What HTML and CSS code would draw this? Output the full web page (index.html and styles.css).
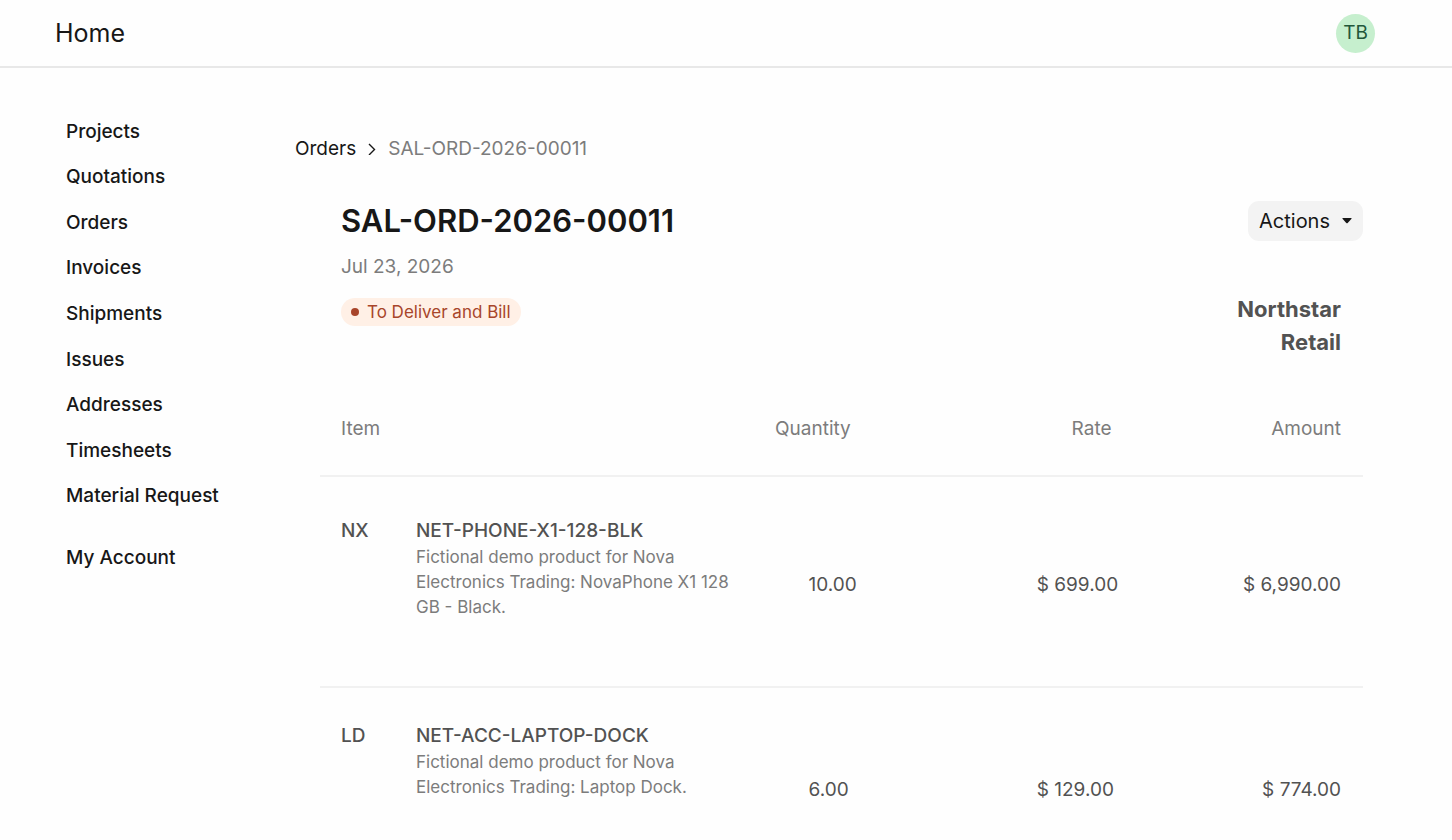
FILE: index.html
```html
<!DOCTYPE html>
<html lang="en">
<head>
    <meta charset="UTF-8" />
    <meta name="viewport" content="width=device-width, initial-scale=1.0" />
    <title>SAL-ORD-2026-00011</title>
    <link rel="stylesheet" href="styles.css">
</head>
<body>
    <header class="navbar">
        <a class="brand" href="#">Home</a>
        <button type="button" class="avatar" title="Account">TB</button>
    </header>

    <div class="page">
        <nav class="sidebar" aria-label="Portal">
            <ul class="sidebar-items">
                <li><a href="#">Projects</a></li>
                <li><a href="#">Quotations</a></li>
                <li><a href="#">Orders</a></li>
                <li><a href="#">Invoices</a></li>
                <li><a href="#">Shipments</a></li>
                <li><a href="#">Issues</a></li>
                <li><a href="#">Addresses</a></li>
                <li><a href="#">Timesheets</a></li>
                <li><a href="#">Material Request</a></li>
            </ul>
            <a class="my-account" href="#">My Account</a>
        </nav>

        <main class="content">
            <nav class="breadcrumb" aria-label="Breadcrumb">
                <a href="#">Orders</a>
                <svg width="8" height="12" viewBox="0 0 8 12" fill="none" stroke="#171717" stroke-width="1.4" aria-hidden="true">
                    <path d="M1 1L6.5 6.5L1 12" />
                </svg>
                <span>SAL-ORD-2026-00011</span>
            </nav>

            <div class="order">
                <div class="order-title">
                    <h1>SAL-ORD-2026-00011</h1>
                    <button type="button" class="btn-actions">
                        Actions
                        <svg width="10" height="6" viewBox="0 0 10 6" fill="#171717" aria-hidden="true">
                            <path d="M1 0H9Q10.2 0 9.3 1L5.7 5Q5 5.7 4.3 5L.7 1Q-.2 0 1 0Z" />
                        </svg>
                    </button>
                </div>

                <div class="order-head">
                    <div>
                        <p class="order-date">Jul 23, 2026</p>
                        <span class="status">To Deliver and Bill</span>
                    </div>
                    <p class="customer">Northstar Retail</p>
                </div>

                <table class="items">
                    <colgroup>
                        <col class="col-code">
                        <col class="col-item">
                        <col class="col-qty">
                        <col class="col-rate">
                        <col class="col-amount">
                    </colgroup>
                    <thead>
                        <tr>
                            <th colspan="2" class="item">Item</th>
                            <th>Quantity</th>
                            <th>Rate</th>
                            <th>Amount</th>
                        </tr>
                    </thead>
                    <tbody>
                        <tr>
                            <td class="code">NX</td>
                            <td class="detail">
                                <div class="name">NET-PHONE-X1-128-BLK</div>
                                <p>Fictional demo product for Nova Electronics Trading: NovaPhone X1 128 GB - Black.</p>
                            </td>
                            <td class="qty">10.00</td>
                            <td class="rate">$ 699.00</td>
                            <td class="amount">$ 6,990.00</td>
                        </tr>
                        <tr>
                            <td class="code">LD</td>
                            <td class="detail">
                                <div class="name">NET-ACC-LAPTOP-DOCK</div>
                                <p>Fictional demo product for Nova Electronics Trading: Laptop Dock.</p>
                            </td>
                            <td class="qty">6.00</td>
                            <td class="rate">$ 129.00</td>
                            <td class="amount">$ 774.00</td>
                        </tr>
                    </tbody>
                </table>
            </div>
        </main>
    </div>
</body>
</html>
```
FILE: styles.css
```css
* {
    box-sizing: border-box;
    margin: 0;
    padding: 0;
}
body {
    background: #fefefe;
    color: #171717;
    font-family: "Inter", sans-serif;
    font-size: 19px;
    line-height: 28px;
}
a {
    color: inherit;
    text-decoration: none;
}
button {
    border: none;
    font: inherit;
    color: inherit;
    cursor: pointer;
}
ul {
    list-style: none;
}

.navbar {
    display: flex;
    justify-content: space-between;
    align-items: center;
    height: 68px;
    padding: 0 77px 0 55px;
    border-bottom: 2px solid #e8e8e8;
}
.brand {
    font-size: 25px;
}
.avatar {
    width: 39px;
    height: 39px;
    border-radius: 50%;
    background: #c6efce;
    color: #22573a;
}

.page {
    display: flex;
    padding: 0 89px 0 66px;
}
.sidebar {
    flex: 0 0 229px;
    padding-top: 41px;
    font-weight: 500;
}
.sidebar-items {
    display: grid;
    align-items: center;
    min-height: 410px;
}
.my-account {
    display: block;
    margin-top: 25px;
}

.content {
    flex: 1;
    min-width: 0;
    padding-top: 67px;
}
.breadcrumb {
    display: flex;
    align-items: center;
    gap: 12px;
}
.breadcrumb span {
    color: #7c7c7c;
}

.order {
    padding: 38px 0 0 25px;
}
.order-title {
    display: flex;
    justify-content: space-between;
    align-items: center;
    padding-left: 21px;
}
h1 {
    font-size: 31px;
    line-height: 40px;
    font-weight: 600;
}
.btn-actions {
    display: flex;
    align-items: center;
    gap: 12px;
    height: 40px;
    padding: 0 11px;
    border-radius: 11px;
    background: #f3f3f3;
    font-size: 20px;
}

.order-head {
    display: flex;
    justify-content: space-between;
    padding: 12px 22px 0 21px;
}
.order-date {
    color: #7c7c7c;
}
.status {
    display: flex;
    align-items: center;
    gap: 8px;
    height: 28px;
    margin-top: 17px;
    padding: 0 10px;
    border-radius: 14px;
    background: #fff0e6;
    color: #a8452a;
    font-size: 17px;
}
.status::before {
    content: "";
    width: 8px;
    height: 8px;
    border-radius: 50%;
    background: #a8452a;
}
.customer {
    width: 150px;
    margin-top: 40px;
    color: #525252;
    font-size: 22px;
    line-height: 33px;
    font-weight: 700;
    text-align: right;
}

.items {
    width: 100%;
    margin-top: 35px;
    table-layout: fixed;
    border-collapse: separate;
    border-spacing: 0;
}
.col-code {
    width: 7%;
}
.col-item {
    width: 34%;
}
.col-qty {
    width: 12%;
}
.col-rate {
    width: 25%;
}
.col-amount {
    width: 22%;
}
.items th {
    padding: 21px 22px 32px 0;
    border-bottom: 2px solid #f1f1f1;
    color: #7c7c7c;
    font-weight: 400;
    text-align: right;
}
.items .item {
    padding-left: 21px;
    text-align: left;
}
.items td {
    padding: 34px 0 66px;
    border-bottom: 2px solid #f1f1f1;
    color: #525252;
    vertical-align: top;
}
.items tr:first-child td {
    padding-top: 40px;
}
.items .code {
    padding-left: 21px;
    font-weight: 500;
}
.items .detail {
    padding-left: 23px;
    padding-right: 8px;
}
.name {
    font-weight: 500;
}
.detail p {
    color: #7c7c7c;
    font-size: 17px;
    line-height: 25px;
}
.items .qty,
.items .rate,
.items .amount {
    padding-top: 88px;
}
.items tr:first-child .qty,
.items tr:first-child .rate,
.items tr:first-child .amount {
    padding-top: 94px;
}
.items .qty {
    padding-left: 61px;
}
.items .rate {
    padding-left: 164px;
}
.items .amount {
    padding-right: 22px;
    text-align: right;
}
```
